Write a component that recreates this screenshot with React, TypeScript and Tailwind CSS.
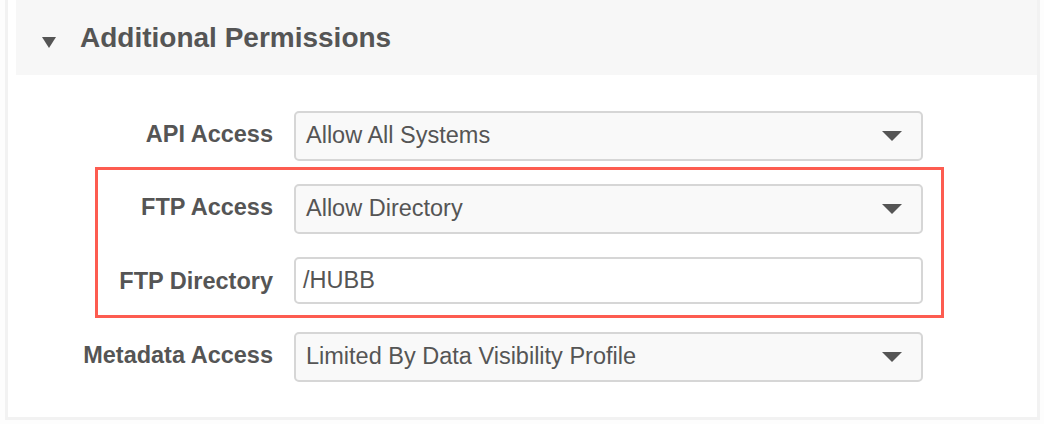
import React from "react";

function Caret() {
  return (
    <svg width="20" height="10" viewBox="0 0 20 10" className="shrink-0">
      <polygon points="0,0 20,0 10,10" fill="#555555" />
    </svg>
  );
}

function SelectBox({ value }: { value: string }) {
  return (
    <div className="flex h-[50px] w-[629px] items-center justify-between rounded-[5px] border-2 border-[#d6d6d6] bg-[#f9f9f9] pl-[10px] pr-[19px] text-[23.5px] text-[#555555]">
      <span>{value}</span>
      <Caret />
    </div>
  );
}

function InputBox({ value }: { value: string }) {
  return (
    <div className="flex h-[47px] w-[629px] items-center rounded-[5px] border-2 border-[#d6d6d6] bg-white pl-[7px] text-[23.5px] text-[#555555]">
      <span>{value}</span>
    </div>
  );
}

function Row({
  label,
  children,
  className,
  labelClass,
}: {
  label: string;
  children: React.ReactNode;
  className?: string;
  labelClass?: string;
}) {
  return (
    <div className={"flex items-center gap-[21px] " + (className ?? "")}>
      <div className={"w-[257px] text-right text-[23.5px] font-bold text-[#555555] " + (labelClass ?? "pb-[3px]")}>
        {label}
      </div>
      {children}
    </div>
  );
}

export default function App() {
  return (
    <div className="relative h-[424px] w-[1044px] bg-[#fdfdfd] pl-[5px] pr-[4px] font-['Liberation_Sans',Arial,sans-serif]">
      <div className="h-[420px] border-[3px] border-t-0 border-[#f2f2f2] bg-white pl-[8px]">
        <div className="flex h-[75px] items-center bg-[#f7f7f7] pl-[26px]">
          <svg width="14" height="11" viewBox="0 0 14 11" className="mt-[10px] shrink-0">
            <polygon points="0,0 14,0 7,11" fill="#555555" />
          </svg>
          <span className="ml-[24px] text-[28px] font-bold text-[#555555]">Additional Permissions</span>
        </div>
        <div className="pt-[36px]">
          <Row label="API Access">
            <SelectBox value="Allow All Systems" />
          </Row>
          <Row label="FTP Access" className="mt-[23px]">
            <SelectBox value="Allow Directory" />
          </Row>
          <Row label="FTP Directory" className="mt-[23px]" labelClass="pt-[2px]">
            <InputBox value="/HUBB" />
          </Row>
          <Row label="Metadata Access" className="mt-[28px]">
            <SelectBox value="Limited By Data Visibility Profile" />
          </Row>
        </div>
      </div>
      <div className="pointer-events-none absolute left-[95px] top-[167px] h-[151px] w-[849px] border-[3px] border-[#fd5c50]" />
    </div>
  );
}
